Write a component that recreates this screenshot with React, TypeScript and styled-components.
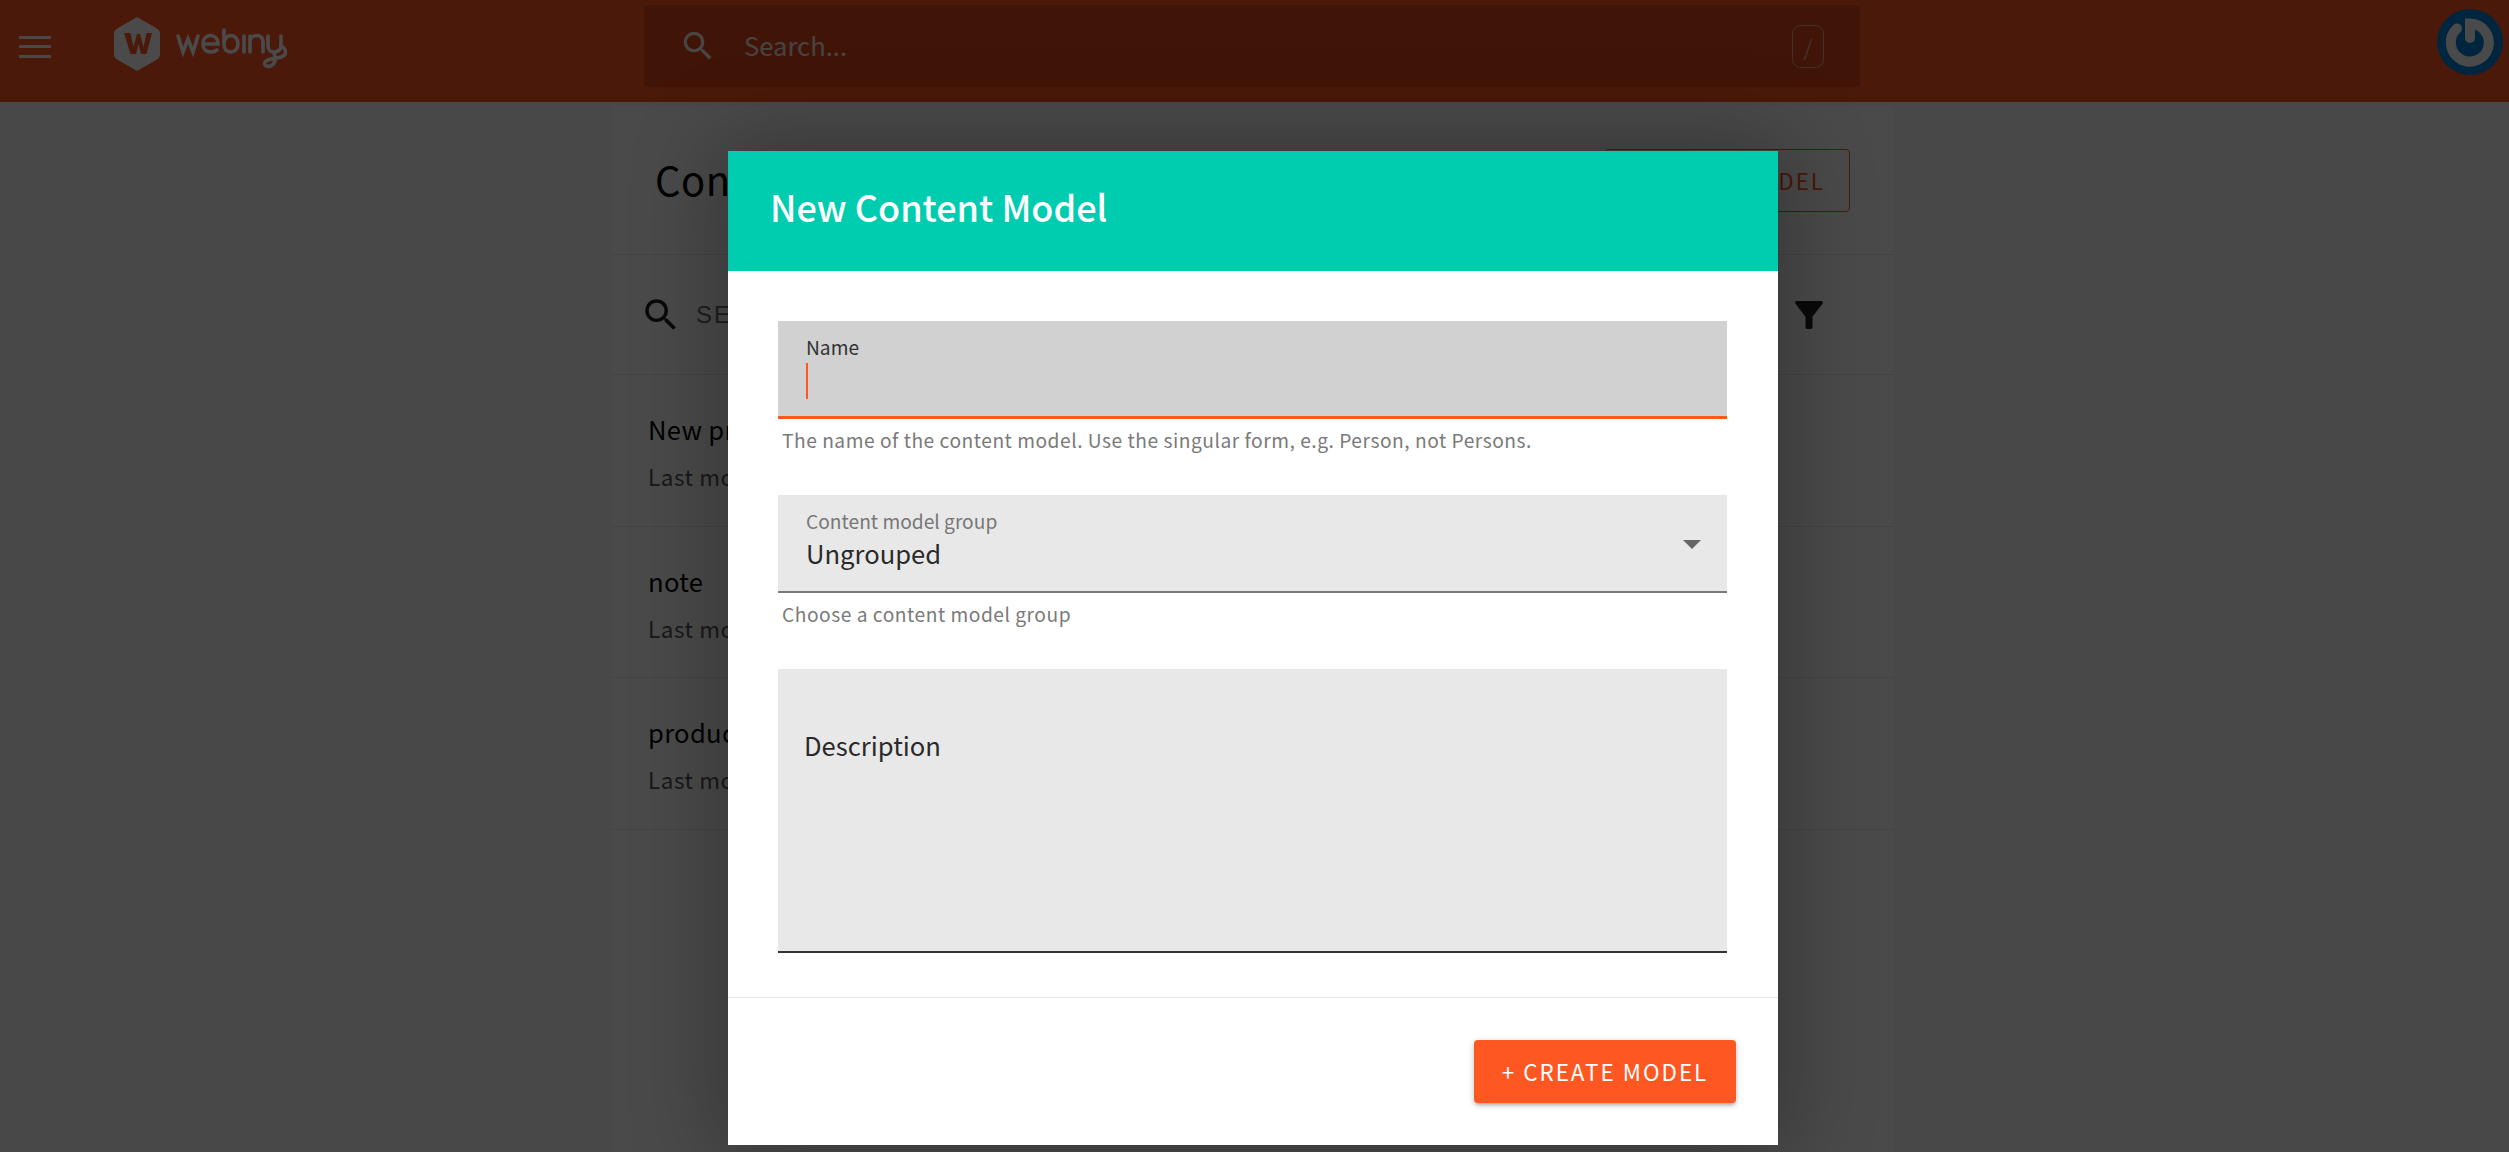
import React from "react";
import styled, { createGlobalStyle } from "styled-components";

const SOURCE = `"Noto Sans CJK SC", "Noto Sans", sans-serif`;

const Global = createGlobalStyle`
  html, body { margin: 0; padding: 0; height: 100%; overflow: hidden; background: #f9f9f9; }
  #root { height: 100%; }
  * { box-sizing: border-box; }
  body { font-family: ${SOURCE}; }
`;

const Page = styled.div`
  position: relative;
  width: 2509px;
  height: 1152px;
  overflow: hidden;
  display: flex;
  flex-direction: column;
`;

const TopBar = styled.header`
  height: 102px;
  flex: none;
  background: #ff5722;
  display: flex;
  align-items: center;
  position: relative;
`;

const MenuButton = styled.div`
  width: 32px;
  height: 22px;
  margin-left: 19px;
  margin-top: -9px;
  display: flex;
  flex-direction: column;
  justify-content: space-between;
  span { display: block; height: 3px; background: #fff; opacity: .95; }
`;

const Logo = styled.div`
  margin-left: 62px;
  margin-top: -14px;
  display: flex;
  align-items: center;
`;

const SearchBox = styled.div`
  margin-left: 355px;
  margin-top: -10px;
  width: 1216px;
  height: 82px;
  border-radius: 4px;
  background: rgba(0, 0, 0, 0.14);
  display: flex;
  align-items: center;
  padding: 0 36px 0 35px;
  color: #fff;
`;

const SearchPlaceholder = styled.div`
  flex: 1;
  margin: -3px 0 0 27px;
  font-size: 25.6px;
  line-height: 40px;
  color: rgba(255, 255, 255, 0.9);
`;

const KeyHint = styled.div`
  width: 32px;
  height: 43px;
  border: 1px solid rgba(255, 255, 255, 0.5);
  border-radius: 9px;
  display: flex;
  align-items: center;
  justify-content: center;
  font-size: 22px;
  font-weight: 300;
  color: rgba(255, 255, 255, 0.7);
`;

const Avatar = styled.div`
  position: absolute;
  left: 2437px;
  top: 9px;
  width: 66px;
  height: 66px;
  border-radius: 50%;
  background: #0084d8;
  display: flex;
  align-items: center;
  justify-content: center;
`;

const Body = styled.main`
  flex: 1;
  display: grid;
  grid-template-columns: 612px 1281px 1fr;
  min-height: 0;
`;

const Panel = styled.section`
  grid-column: 2;
  background: #fff;
  display: flex;
  flex-direction: column;
  margin-top: 4px;
`;

const PanelHeader = styled.div`
  height: 149px;
  flex: none;
  border-bottom: 1px solid #e6e6e6;
  display: flex;
  align-items: center;
  justify-content: space-between;
  padding: 0 43px 0 43px;
`;

const PanelTitle = styled.h1`
  margin: -2px 0 0;
  font-weight: 400;
  font-size: 40px;
  line-height: 48px;
  letter-spacing: 0.5px;
  color: #000;
`;

const OutlineButton = styled.div`
  width: 246px;
  height: 63px;
  margin-top: 1px;
  border: 1px solid #ff5722;
  border-radius: 4px;
  color: #ff5722;
  font-size: 22.4px;
  letter-spacing: 2px;
  display: flex;
  align-items: center;
  justify-content: flex-end;
  padding: 0 24px 2px 0;
`;

const FilterBar = styled.div`
  height: 120px;
  flex: none;
  border-bottom: 1px solid #e6e6e6;
  display: flex;
  align-items: center;
  padding: 0 63px 0 28px;
`;

const FilterInput = styled.div`
  flex: 1;
  margin-left: 14px;
  font-family: "Liberation Sans", sans-serif;
  font-size: 24px;
  letter-spacing: 2px;
  color: #666;
`;

const Row = styled.div`
  height: 151.6px;
  flex: none;
  border-bottom: 1px solid #e6e6e6;
  padding: 36px 36px 0;
`;

const RowTitle = styled.div`
  font-size: 25.6px;
  line-height: 36px;
  letter-spacing: 0.3px;
  color: #000;
`;

const RowMeta = styled.div`
  margin-top: 13px;
  font-size: 22.4px;
  line-height: 32px;
  letter-spacing: 0.6px;
  color: #555;
`;

const Scrim = styled.div`
  position: absolute;
  inset: 0;
  background: rgba(0, 0, 0, 0.71);
  padding: 151px 0 0 728px;
`;

const Dialog = styled.div`
  width: 1050px;
  height: 994px;
  background: #fff;
  display: flex;
  flex-direction: column;
  box-shadow: 0 0 80px 10px rgba(0, 0, 0, 0.28);
`;

const DialogHeader = styled.div`
  height: 120px;
  flex: none;
  background: #00ccb0;
  display: flex;
  align-items: center;
  padding: 0 0 10px 42px;
`;

const DialogTitle = styled.h2`
  margin: 0;
  font-size: 36px;
  font-weight: 500;
  line-height: 48px;
  color: #fff;
`;

const DialogBody = styled.div`
  flex: 1;
  padding: 50px 51px 0 50px;
  display: flex;
  flex-direction: column;
  border-bottom: 1px solid #e6e6e6;
`;

const Field = styled.div<{ $background: string; $line: string; $lineWidth: number; $h: number; $pad: string }>`
  position: relative;
  height: ${(p) => p.$h}px;
  flex: none;
  background: ${(p) => p.$background};
  border-bottom: ${(p) => p.$lineWidth}px solid ${(p) => p.$line};
  padding: ${(p) => p.$pad};
  display: flex;
  flex-direction: column;
`;

const FloatingLabel = styled.div<{ $active?: boolean }>`
  font-size: 19.2px;
  line-height: 28px;
  color: ${(p) => (p.$active ? "#333" : "#777")};
`;

const Caret = styled.div`
  width: 1.5px;
  height: 36px;
  margin-top: 2px;
  background: #ff5722;
`;

const FieldValue = styled.div`
  font-size: 25.6px;
  line-height: 36px;
  color: #2a2a2a;
`;

const SelectArrow = styled.div`
  position: absolute;
  right: 26px;
  top: 45px;
  width: 0;
  height: 0;
  border-left: 9px solid transparent;
  border-right: 9px solid transparent;
  border-top: 9px solid #666;
`;

const Helper = styled.div`
  margin: 7px 0 0 4px;
  height: 69px;
  flex: none;
  font-size: 19.2px;
  line-height: 28px;
  letter-spacing: 0.52px;
  color: #7a7a7a;
`;

const DialogFooter = styled.div`
  height: 147px;
  flex: none;
  display: flex;
  justify-content: flex-end;
  padding: 42px 42px 0 0;
`;

const PrimaryButton = styled.div`
  width: 262px;
  height: 63px;
  padding-bottom: 2px;
  background: #ff5722;
  border-radius: 4px;
  color: #fff;
  font-size: 22.4px;
  letter-spacing: 2px;
  display: flex;
  align-items: center;
  justify-content: center;
  box-shadow: 0 3px 3px -2px rgba(0,0,0,.2), 0 3px 4px 0 rgba(0,0,0,.14), 0 1px 8px 0 rgba(0,0,0,.12);
`;

const SearchIcon = ({ size, color }: { size: number; color: string }) => (
  <svg width={size} height={size} viewBox="0 0 24 24" fill={color}>
    <path d="M15.5 14h-.79l-.28-.27A6.471 6.471 0 0 0 16 9.5 6.5 6.5 0 1 0 9.5 16c1.61 0 3.09-.59 4.23-1.57l.27.28v.79l5 4.99L20.49 19l-4.99-5zm-6 0C7.01 14 5 11.99 5 9.5S7.01 5 9.5 5 14 7.01 14 9.5 11.99 14 9.5 14z" />
  </svg>
);

const FilterIcon = () => (
  <svg width="42" height="42" viewBox="0 0 24 24" fill="#222">
    <path d="M4.25 5.61C6.27 8.2 10 13 10 13v6c0 .55.45 1 1 1h2c.55 0 1-.45 1-1v-6s3.72-4.8 5.74-7.39A.998.998 0 0 0 18.95 4H5.04c-.83 0-1.3.95-.79 1.61z" />
  </svg>
);

const WebinyLogo = () => (
  <svg width="176" height="56" viewBox="0 0 176 56">
    <path d="M24 1 L43 12 Q47 14 47 18 L47 38 Q47 42 43 44 L24 55 L5 44 Q1 42 1 38 L1 18 Q1 14 5 12 Z" fill="#fff" />
    <path d="M11 17 H17.5 L20.5 31 L24 18 H27 L30.5 31 L33.5 17 H39 L33.5 38 H28 L25.5 28 L23 38 H17.5 Z" fill="#ff5722" />
    <g fill="none" stroke="#fff" strokeWidth="3.600" strokeLinecap="round" transform="translate(0 1)">
      <path d="M65 19 L70 35 L75 22 L80 35 L85 19" />
      <path d="M90 27 H105 C105 21 101 18.500 97.500 18.500 C93 18.500 90 22 90 27 C90 32 93 35 98 35 C100.500 35 102.500 34.500 104 33" />
      <path d="M111 13 V28 C111 32 114 35 118 35 C122 35 125 31.500 125 27 C125 22 122 18.500 118 18.500 C114 18.500 111 22 111 27" />
      <path d="M131 19 V35" />
      <path d="M137 35 V19 M137 25 C137 21 140 18.500 143.500 18.500 C147.500 18.500 150 21 150 25 V35" />
      <path d="M155 19 V29 C155 33 158 35 161 35 C164 35 168 33 168 29 V19" />
      <path d="M168 29 C174 32 174 38 168 40 C162 42 155 41 152 45 C150 49 155 50 158 49 C162 47 163 42 161 36" />
    </g>
  </svg>
);

const PowerLogo = () => (
  <svg width="66" height="66" viewBox="0 0 66 66" fill="none">
    <path d="M20 19.500 A19 19 0 1 0 33 14.500 V29" stroke="#fff" strokeWidth="10" strokeLinecap="round" />
  </svg>
);

export default function App() {
  return (
    <Page>
      <Global />
      <TopBar>
        <MenuButton>
          <span />
          <span />
          <span />
        </MenuButton>
        <Logo>
          <WebinyLogo />
        </Logo>
        <SearchBox>
          <SearchIcon size={38} color="rgba(255,255,255,.9)" />
          <SearchPlaceholder>Search...</SearchPlaceholder>
          <KeyHint>/</KeyHint>
        </SearchBox>
        <Avatar>
          <PowerLogo />
        </Avatar>
      </TopBar>
      <Body>
        <Panel>
          <PanelHeader>
            <PanelTitle>Content Models</PanelTitle>
            <OutlineButton>+ NEW MODEL</OutlineButton>
          </PanelHeader>
          <FilterBar>
            <SearchIcon size={42} color="#222" />
            <FilterInput>SEARCH CONTENT MODELS</FilterInput>
            <FilterIcon />
          </FilterBar>
          <Row>
            <RowTitle>New product</RowTitle>
            <RowMeta>Last modified: 2 days ago</RowMeta>
          </Row>
          <Row>
            <RowTitle>note</RowTitle>
            <RowMeta>Last modified: 2 days ago</RowMeta>
          </Row>
          <Row>
            <RowTitle>product</RowTitle>
            <RowMeta>Last modified: 2 days ago</RowMeta>
          </Row>
        </Panel>
      </Body>
      <Scrim>
        <Dialog>
          <DialogHeader>
            <DialogTitle>New Content Model</DialogTitle>
          </DialogHeader>
          <DialogBody>
            <Field $background="#d1d1d1" $line="#ff5722" $lineWidth={3} $h={98} $pad="12px 28px 0">
              <FloatingLabel $active>Name</FloatingLabel>
              <Caret />
            </Field>
            <Helper>The name of the content model. Use the singular form, e.g. Person, not Persons.</Helper>
            <Field $background="#e8e8e8" $line="#7a7a7a" $lineWidth={2} $h={98} $pad="12px 28px 0">
              <FloatingLabel>Content model group</FloatingLabel>
              <FieldValue>Ungrouped</FieldValue>
              <SelectArrow />
            </Field>
            <Helper>Choose a content model group</Helper>
            <Field $background="#e8e8e8" $line="#333" $lineWidth={2} $h={284} $pad="58px 26px 0">
              <FieldValue>Description</FieldValue>
            </Field>
          </DialogBody>
          <DialogFooter>
            <PrimaryButton>+ CREATE MODEL</PrimaryButton>
          </DialogFooter>
        </Dialog>
      </Scrim>
    </Page>
  );
}
